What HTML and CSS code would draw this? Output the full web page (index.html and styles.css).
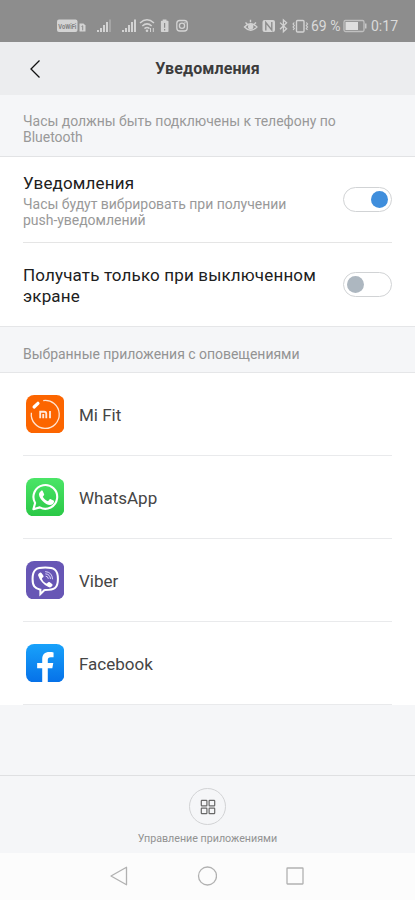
FILE: index.html
```html
<!DOCTYPE html>
<html lang="ru">
<head>
<meta charset="utf-8">
<title>Уведомления</title>
<link rel="stylesheet" href="styles.css">
</head>
<body>
<div class="status">
  <svg class="status-left" width="140" height="20" viewBox="56 16 140 20" fill="#d3d3d3">
    <rect x="57" y="19.5" width="20.5" height="12.5" rx="2"/>
    <text class="vowifi" x="58.3" y="28.700" textLength="18" lengthAdjust="spacingAndGlyphs">VoWiFi</text>
    <path d="M79.5 23.5h4l2 2v6h-6z"/><path d="M81.500 26.500l1.200-.7v4.500" stroke="#8d8d8d" fill="none"/>
    <path d="M97 30h2v2h-2zM100 28h2v4h-2zM103 25h2v7h-2zM106 22h2v10h-2z"/>
    <path d="M109 19.5h2V32h-2z" opacity=".35"/>
    <path d="M122 30h2v2h-2zM125 28h2v4h-2zM128 25h2v7h-2zM131 22h2v10h-2zM134 19.5h2V32h-2z"/>
    <g fill="none" stroke="#d3d3d3" stroke-width="1.500"><path d="M140 23q7-6.500 14 0M142.300 26q4.700-4.300 9.400 0M144.500 28.600q2.500-2.300 5 0"/></g>
    <circle cx="147" cy="30.800" r="1.300"/><path d="M150.500 28v4M153.300 28v4" stroke="#d3d3d3" stroke-width="1"/>
    <path d="M162.700 19.500h3.800v1.300h1.200q.8 0 .8.800v9.600q0 .8-.8.800h-6q-.8 0-.8-.8v-9.600q0-.8.800-.8h1z"/>
    <path d="M164.600 23v4.800M164.600 29v1.500" stroke="#8d8d8d" stroke-width="1.200"/>
    <g fill="none" stroke="#d3d3d3" stroke-width="1.300"><rect x="176.800" y="20.500" width="10.500" height="10.500" rx="3"/><circle cx="182" cy="25.800" r="2.600"/></g>
    <circle cx="185" cy="22.800" r=".7"/>
  </svg>
  <div class="status-right">
    <svg width="66" height="20" viewBox="243.500 16 66 20" fill="none" stroke="#d3d3d3" stroke-width="1.400">
      <path d="M245 27q6.200-6.500 12.400 0q-6.200 6.500-12.400 0zM246 22.500l1.600 1.500M251 19.800v2.500M256.500 22.500l-1.600 1.500"/>
      <circle cx="251.200" cy="26.800" r="2" fill="#d3d3d3"/>
      <rect x="263" y="20" width="12.500" height="12" rx="2" fill="#d3d3d3" stroke="none"/>
      <path d="M266.300 30.500v-8l6 7.500v-8" stroke="#8d8d8d" stroke-width="1.400"/>
      <path d="M280.500 22.600l6.600 6.200-3.200 3V20l3.200 2.800-6.600 6.400" stroke-width="1.300"/>
      <rect x="297" y="20.500" width="7.500" height="11.500" rx="1"/>
      <path d="M294.800 22.500l-1.200 1.500 1.200 1.500-1.200 1.500 1.200 1.500-1.200 1.500M306.800 22.500l1.200 1.500-1.200 1.500 1.200 1.500-1.200 1.500 1.200 1.500" stroke-width="1.200"/>
    </svg>
    <span class="percent">69 %</span>
    <svg class="battery" width="24" height="14" viewBox="343 19 24 14">
      <rect x="344" y="20.500" width="20" height="11" rx="1.500" fill="none" stroke="#c0c0c0" stroke-width="1.300"/>
      <path d="M345.500 22H358v8h-12.500z" fill="#dedede"/><path d="M365 23.500h1.500v5H365z" fill="#c8c8c8"/>
    </svg>
    <span class="clock">0:17</span>
  </div>
</div>
<header class="header">
  <svg class="back" width="12" height="20" viewBox="0 0 12 20"><path d="M10.500 1.500L2 10l8.500 8.500" fill="none" stroke="#111" stroke-width="1.300"/></svg>
  <h1 class="title">Уведомления</h1>
</header>
<p class="notice">Часы должны быть подключены к телефону по<br>Bluetooth</p>
<section class="settings">
  <div class="setting first">
    <div><div class="setting-name">Уведомления</div><div class="setting-desc">Часы будут вибрировать при получении<br>push-уведомлений</div></div>
    <div class="toggle on"><i class="knob"></i></div>
  </div>
  <div class="setting second">
    <div class="setting-name wide">Получать только при выключенном<br>экране</div>
    <div class="toggle"><i class="knob"></i></div>
  </div>
</section>
<h2 class="section">Выбранные приложения с оповещениями</h2>
<main class="apps">
  <div class="app">
    <svg class="icon" viewBox="0 0 38 38"><rect width="38" height="38" rx="8" fill="#fc6500"/>
      <path d="M17 5.500A13.800 13.800 0 1 1 5.300 17.500" fill="none" stroke="#ffe4d2" stroke-width="1.300"/>
      <path d="M8 11.800l3.800-3.600" stroke="#fff" stroke-width="3.200" stroke-linecap="round"/>
      <path d="M14 23v-6.500h4q2 0 2 2V23M17 18.800V23M23.700 15.800V23" fill="none" stroke="#ffe9db" stroke-width="1.800"/></svg>
    <span>Mi Fit</span>
  </div>
  <div class="app">
    <svg class="icon" viewBox="0 0 38 38"><defs><linearGradient id="green" x2="0" y2="1"><stop stop-color="#4be567"/><stop offset="1" stop-color="#2ac846"/></linearGradient></defs><rect width="38" height="38" rx="8" fill="url(#green)"/>
      <path d="M7.300 30.800l1.700-6.200A11.700 11.700 0 1 1 13.600 29z" fill="none" stroke="#fff" stroke-width="2.100" stroke-linejoin="round"/>
      <path d="M14.800 12.800c.5-.5 1.300-.5 1.700.1l1.400 3.200c.2.700-.2 1.200-1.300 2.300 1.200 2.200 2.900 3.700 5.100 4.600l1.500-1.800c.4-.5.8-.4 1.300-.2l2.600 1.300c.5.300.7.500.5 1.400-.4 2-2 3-4 3-4.600-.3-10.400-5.900-10.800-10.400 0-1.400 1-2.700 2-3.500z" fill="#fff"/></svg>
    <span>WhatsApp</span>
  </div>
  <div class="app">
    <svg class="icon" viewBox="0 0 38 38"><rect width="38" height="38" rx="8" fill="#6756b5"/>
      <path d="M19 6.500c8.800 0 12.500 2 12.500 11.200 0 9.300-3.700 11-12.500 11l-1 .1-3.800 3.900v-4.400C8.400 27 6.500 24.500 6.500 17.700 6.500 8.500 10.200 6.500 19 6.500z" fill="none" stroke="#fff" stroke-width="2"/>
      <path d="M13.700 11.600c.7-.5 1.300-.2 1.800.4l1.600 2.300c.5.900.2 1.500-.6 2.100-1 .8-.8 1.200-.2 2.400.9 1.700 1.900 2.600 3.700 3.300.6.200.9 0 1.400-.7.700-.9 1.300-.9 2.100-.4l2.200 1.600c.8.600.7 1.300.1 2.100-1.100 1.400-2.100 1.700-3.600 1-5-2.300-8.500-6.200-10.200-11.300-.3-1.200.6-2.100 1.700-2.800z" fill="#fff"/>
      <path d="M19.300 10.500q6.500.3 6.900 7.200M19.500 12.700q4.300.3 4.600 4.700M19.800 15q2 .1 2.200 2.200" fill="none" stroke="#e5e0ff" stroke-width=".9" stroke-linecap="round"/></svg>
    <span>Viber</span>
  </div>
  <div class="app">
    <svg class="icon" viewBox="0 0 38 38"><defs><linearGradient id="blue" x2="0" y2="1"><stop stop-color="#18a2fb"/><stop offset="1" stop-color="#0671e8"/></linearGradient></defs><rect width="38" height="38" rx="8" fill="url(#blue)"/>
      <path d="M16 38V24h-5v-5.300h5v-3.600C16 10.200 18.600 8 23 8c1.700 0 3.300.2 4.200.3V13h-2.700c-2.400 0-3 1.200-3 2.900v2.800h5.400L26 24h-4.500v14z" fill="#fff"/></svg>
    <span>Facebook</span>
  </div>
</main>
<footer class="manage">
  <div class="manage-button"><svg width="16" height="16" viewBox="0 0 16 16" fill="none" stroke="#686868" stroke-width="1.200"><rect x="1.300" y="1.300" width="5.600" height="5.600" rx=".6"/><rect x="9.100" y="1.300" width="5.600" height="5.600" rx=".6"/><rect x="1.300" y="9.100" width="5.600" height="5.600" rx=".6"/><rect x="9.100" y="9.100" width="5.600" height="5.600" rx=".6"/></svg></div>
  <div class="manage-label">Управление приложениями</div>
</footer>
<nav class="nav">
  <svg width="20" height="20" viewBox="0 0 20 20"><path d="M17.500 1.200v17.600L2 10z"/></svg>
  <svg width="20" height="20" viewBox="0 0 20 20"><circle cx="10.500" cy="10" r="9"/></svg>
  <svg width="20" height="20" viewBox="0 0 20 20"><rect x="2" y="2" width="16" height="16" rx=".5"/></svg>
</nav>
</body>
</html>
```
FILE: styles.css
```css
* { box-sizing: border-box; }
body { margin: 0; width: 415px; height: 900px; overflow: hidden; display: flex; flex-direction: column; background: #f5f6f8; font-family: Roboto, "Noto Sans", sans-serif; color: #202020; }
svg { display: block; flex: none; }
h1, h2, p { margin: 0; font-weight: 400; }
.status { height: 42px; flex: none; display: flex; justify-content: space-between; padding: 16px 17px 0 56px; background: #8d8d8d; color: #dadada; }
.vowifi { font: 700 7.5px Roboto, sans-serif; fill: #808080; }
.status-right { display: flex; height: 20px; align-items: center; font-size: 14px; line-height: 20px; white-space: nowrap; }
.percent { width: 32px; margin-left: 2px; }
.battery { margin-right: 4px; }
.clock { width: 27px; }
.header { height: 53px; flex: none; display: grid; grid-template-columns: 52px 1fr 52px; align-items: center; background: #ecedef; }
.back { margin-left: 29px; }
.title { padding-top: 1px; text-align: center; font-size: 16px; line-height: 20px; font-weight: 700; letter-spacing: .1px; color: #3c3c3c; }
.notice { height: 62px; flex: none; padding: 18px 23px 0; border-bottom: 1px solid #e2e3e5; font-size: 14px; line-height: 16px; letter-spacing: -.03px; color: #999; }
.settings { background: #fff; flex: none; }
.setting { display: flex; justify-content: space-between; margin: 0 23px; }
.first { height: 86px; padding-top: 16px; border-bottom: 1px solid #e5e5e5; }
.second { height: 83px; padding-top: 22px; }
.setting-name { font-size: 17px; line-height: 21px; white-space: nowrap; letter-spacing: .15px; }
.setting-desc { margin-top: 2px; font-size: 14px; line-height: 16px; letter-spacing: -.03px; color: #999; white-space: nowrap; }
.toggle { flex: none; width: 49px; height: 25px; margin-top: 14px; border: 1px solid #d1d3d5; border-radius: 13px; display: flex; align-items: center; padding: 0 3px; }
.second .toggle { margin-top: 7px; }
.on { justify-content: flex-end; }
.knob { width: 17px; height: 17px; border-radius: 50%; background: #adb7c0; }
.on .knob { background: #3f8edc; }
.section { height: 47px; flex: none; padding: 19px 23px 0; border-top: 1px solid #e5e6e8; border-bottom: 1px solid #e5e6e8; font-size: 14px; line-height: 16px; letter-spacing: -.03px; color: #939393; }
.apps { flex: none; background: #fff; }
.app { height: 83px; margin: 0 23px; padding-left: 2.5px; display: flex; align-items: center; gap: 15px; border-bottom: 1px solid #e9eaec; font-size: 17px; line-height: 22px; color: #454545; }
.app span { position: relative; top: 1px; }
.icon { width: 38.5px; height: 38.5px; }
.manage { height: 78px; flex: none; margin-top: auto; border-top: 1px solid #dfe0e2; display: flex; flex-direction: column; align-items: center; padding-top: 12px; }
.manage-button { width: 37px; height: 37px; border: 1px solid #d2d3d5; border-radius: 50%; display: grid; place-items: center; }
.manage-label { margin-top: 7px; font-size: 10.7px; line-height: 14px; color: #929292; }
.nav { height: 47px; flex: none; background: #fcfcfc; display: flex; justify-content: space-between; align-items: center; padding: 0 110px 1px 109px; }
.nav svg { fill: none; stroke: #b1b1b1; stroke-width: 1.300; stroke-linejoin: round; }
```
